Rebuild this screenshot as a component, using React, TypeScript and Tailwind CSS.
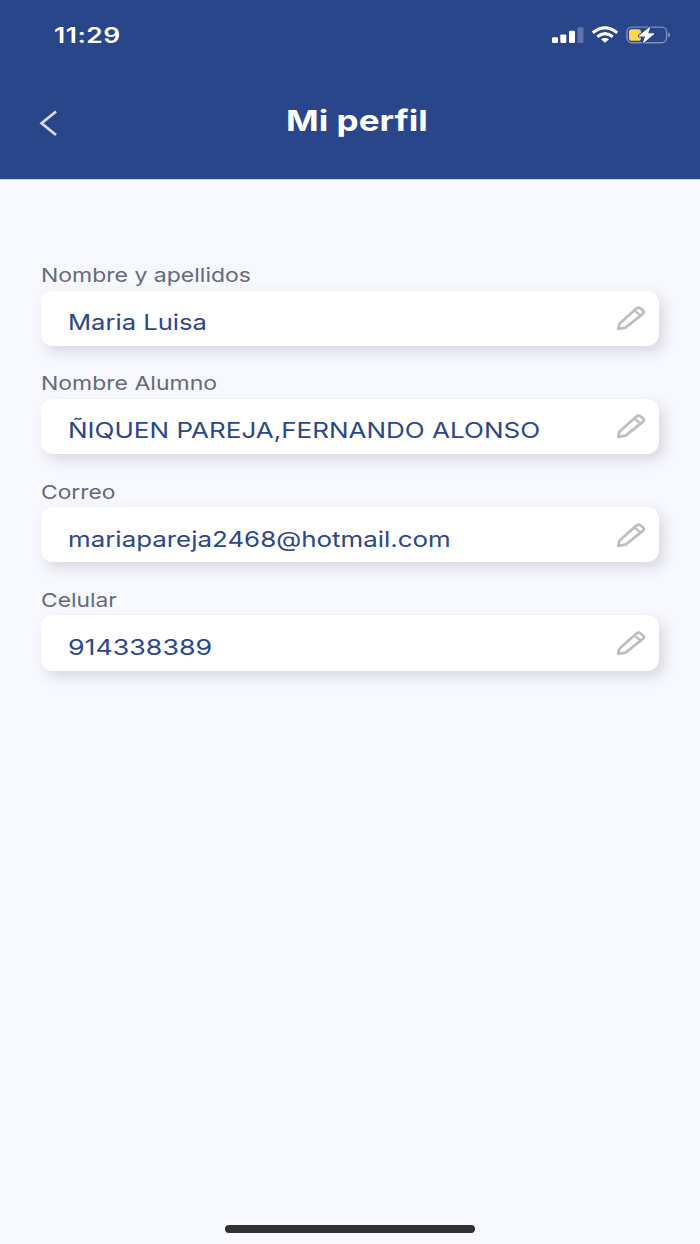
import React from "react";

interface FieldProps {
  label: string;
  value: string;
  labelScale: string;
  valueScale: string;
}

const fields: FieldProps[] = [
  { label: "Nombre y apellidos", value: "Maria Luisa", labelScale: "scale-x-[1.21]", valueScale: "scale-x-[1.19]" },
  { label: "Nombre Alumno", value: "ÑIQUEN PAREJA,FERNANDO ALONSO", labelScale: "scale-x-[1.21]", valueScale: "scale-x-[1.21]" },
  { label: "Correo", value: "mariapareja2468@hotmail.com", labelScale: "scale-x-[1.2]", valueScale: "scale-x-[1.204]" },
  { label: "Celular", value: "914338389", labelScale: "scale-x-[1.2]", valueScale: "scale-x-[1.245]" },
];

const PencilIcon = () => (
  <svg width="30" height="26" viewBox="0 0 30 26" fill="none" stroke="#bebebe" strokeWidth="2.7" strokeLinejoin="round">
    <path d="M2.2 23.8 L3.4 18.8 L20.4 3.6 Q22.6 1.8 24.8 3.5 L26.8 5.2 Q29 7 26.8 8.9 L9.6 22.6 Z" />
    <path d="M18.4 5.4 L24.6 10.6" strokeWidth="2.4" />
  </svg>
);

const StatusIcons = () => (
  <svg width="120" height="20" viewBox="0 0 120 20" fill="none" className="mt-px">
    <rect x="1" y="11.2" width="6" height="5.8" rx="1.2" fill="#fff" />
    <rect x="9.3" y="8.4" width="6" height="8.6" rx="1.2" fill="#fff" />
    <rect x="18" y="4.8" width="6" height="12.2" rx="1.2" fill="#fff" />
    <rect x="26.5" y="1.2" width="6" height="15.8" rx="1.2" fill="#fff" fillOpacity=".25" />
    <g stroke="#fff" strokeWidth="3.1">
      <path d="M41.8 6.7 Q54 -3 66.2 6.7" />
      <path d="M46.3 10.8 Q54 4.3 61.7 10.8" />
    </g>
    <path d="M50 13.2 Q54 10.6 58 13.2 L54 16.8 Z" fill="#fff" />
    <rect x="76" y="1.1" width="39.5" height="15.6" rx="4.8" stroke="#fff" strokeOpacity=".4" strokeWidth="1.4" />
    <path d="M117.2 6.2 Q121 8.9 117.2 11.6 Z" fill="#fff" fillOpacity=".5" />
    <rect x="78" y="3.3" width="12" height="11.4" rx="2.8" fill="#fcd54a" />
    <path
      d="M99.4 0.4 L88 9.6 Q87.6 10.6 88.6 10.6 H94 L91.8 17.4 L103 8.2 Q103.4 7.2 102.4 7.2 H97.2 Z"
      fill="#fff"
      stroke="#2a468a"
      strokeWidth="1.8"
      paintOrder="stroke"
    />
  </svg>
);

const Field: React.FC<FieldProps> = ({ label, value, labelScale, valueScale }) => (
  <div className="h-[108.2px]">
    <div className="flex h-[31px] items-center pt-[3px]">
      <span className={`origin-left whitespace-nowrap text-[19px] text-[#666a7a] ${labelScale}`}>{label}</span>
    </div>
    <div className="flex h-[55.5px] items-center justify-between rounded-xl bg-white pr-[13px] pl-[27px] shadow-[5px_6px_14px_rgba(60,60,80,0.17)]">
      <span className={`mt-[8px] origin-left whitespace-nowrap text-[21.5px] text-[#2c478c] ${valueScale}`}>{value}</span>
      <PencilIcon />
    </div>
  </div>
);

const App: React.FC = () => {
  return (
    <div className="flex h-[1244px] w-[700px] flex-col overflow-hidden bg-[#f8f9fe] font-['Inter',sans-serif]">
      <header className="h-[180px] shrink-0 border-b border-[#c5cde2] bg-[#2a468a] text-white">
        <div className="flex h-[70px] items-center justify-between pr-[29px] pl-[54px]">
          <span className="mt-px origin-left scale-x-[1.26] text-[21px] font-semibold tracking-[0.4px]">11:29</span>
          <StatusIcons />
        </div>
        <div className="flex h-[102px] items-center pl-[39px]">
          <svg width="19" height="28" viewBox="0 0 19 28" fill="none" stroke="#d9deea" strokeWidth="2.7" className="mt-1">
            <path d="M17 2.5 L2.6 14.3 L17 26" />
          </svg>
          <h1 className="ml-[228px] origin-left scale-x-[1.21] whitespace-nowrap text-[29px] font-bold">Mi perfil</h1>
        </div>
      </header>
      <main className="flex-1 px-[41px] pt-[79.5px]">
        {fields.map((field) => (
          <Field key={field.label} {...field} />
        ))}
      </main>
      <footer className="flex h-[19px] justify-center">
        <div className="h-[7.5px] w-[250px] rounded-full bg-[#303030]" />
      </footer>
    </div>
  );
};

export default App;
